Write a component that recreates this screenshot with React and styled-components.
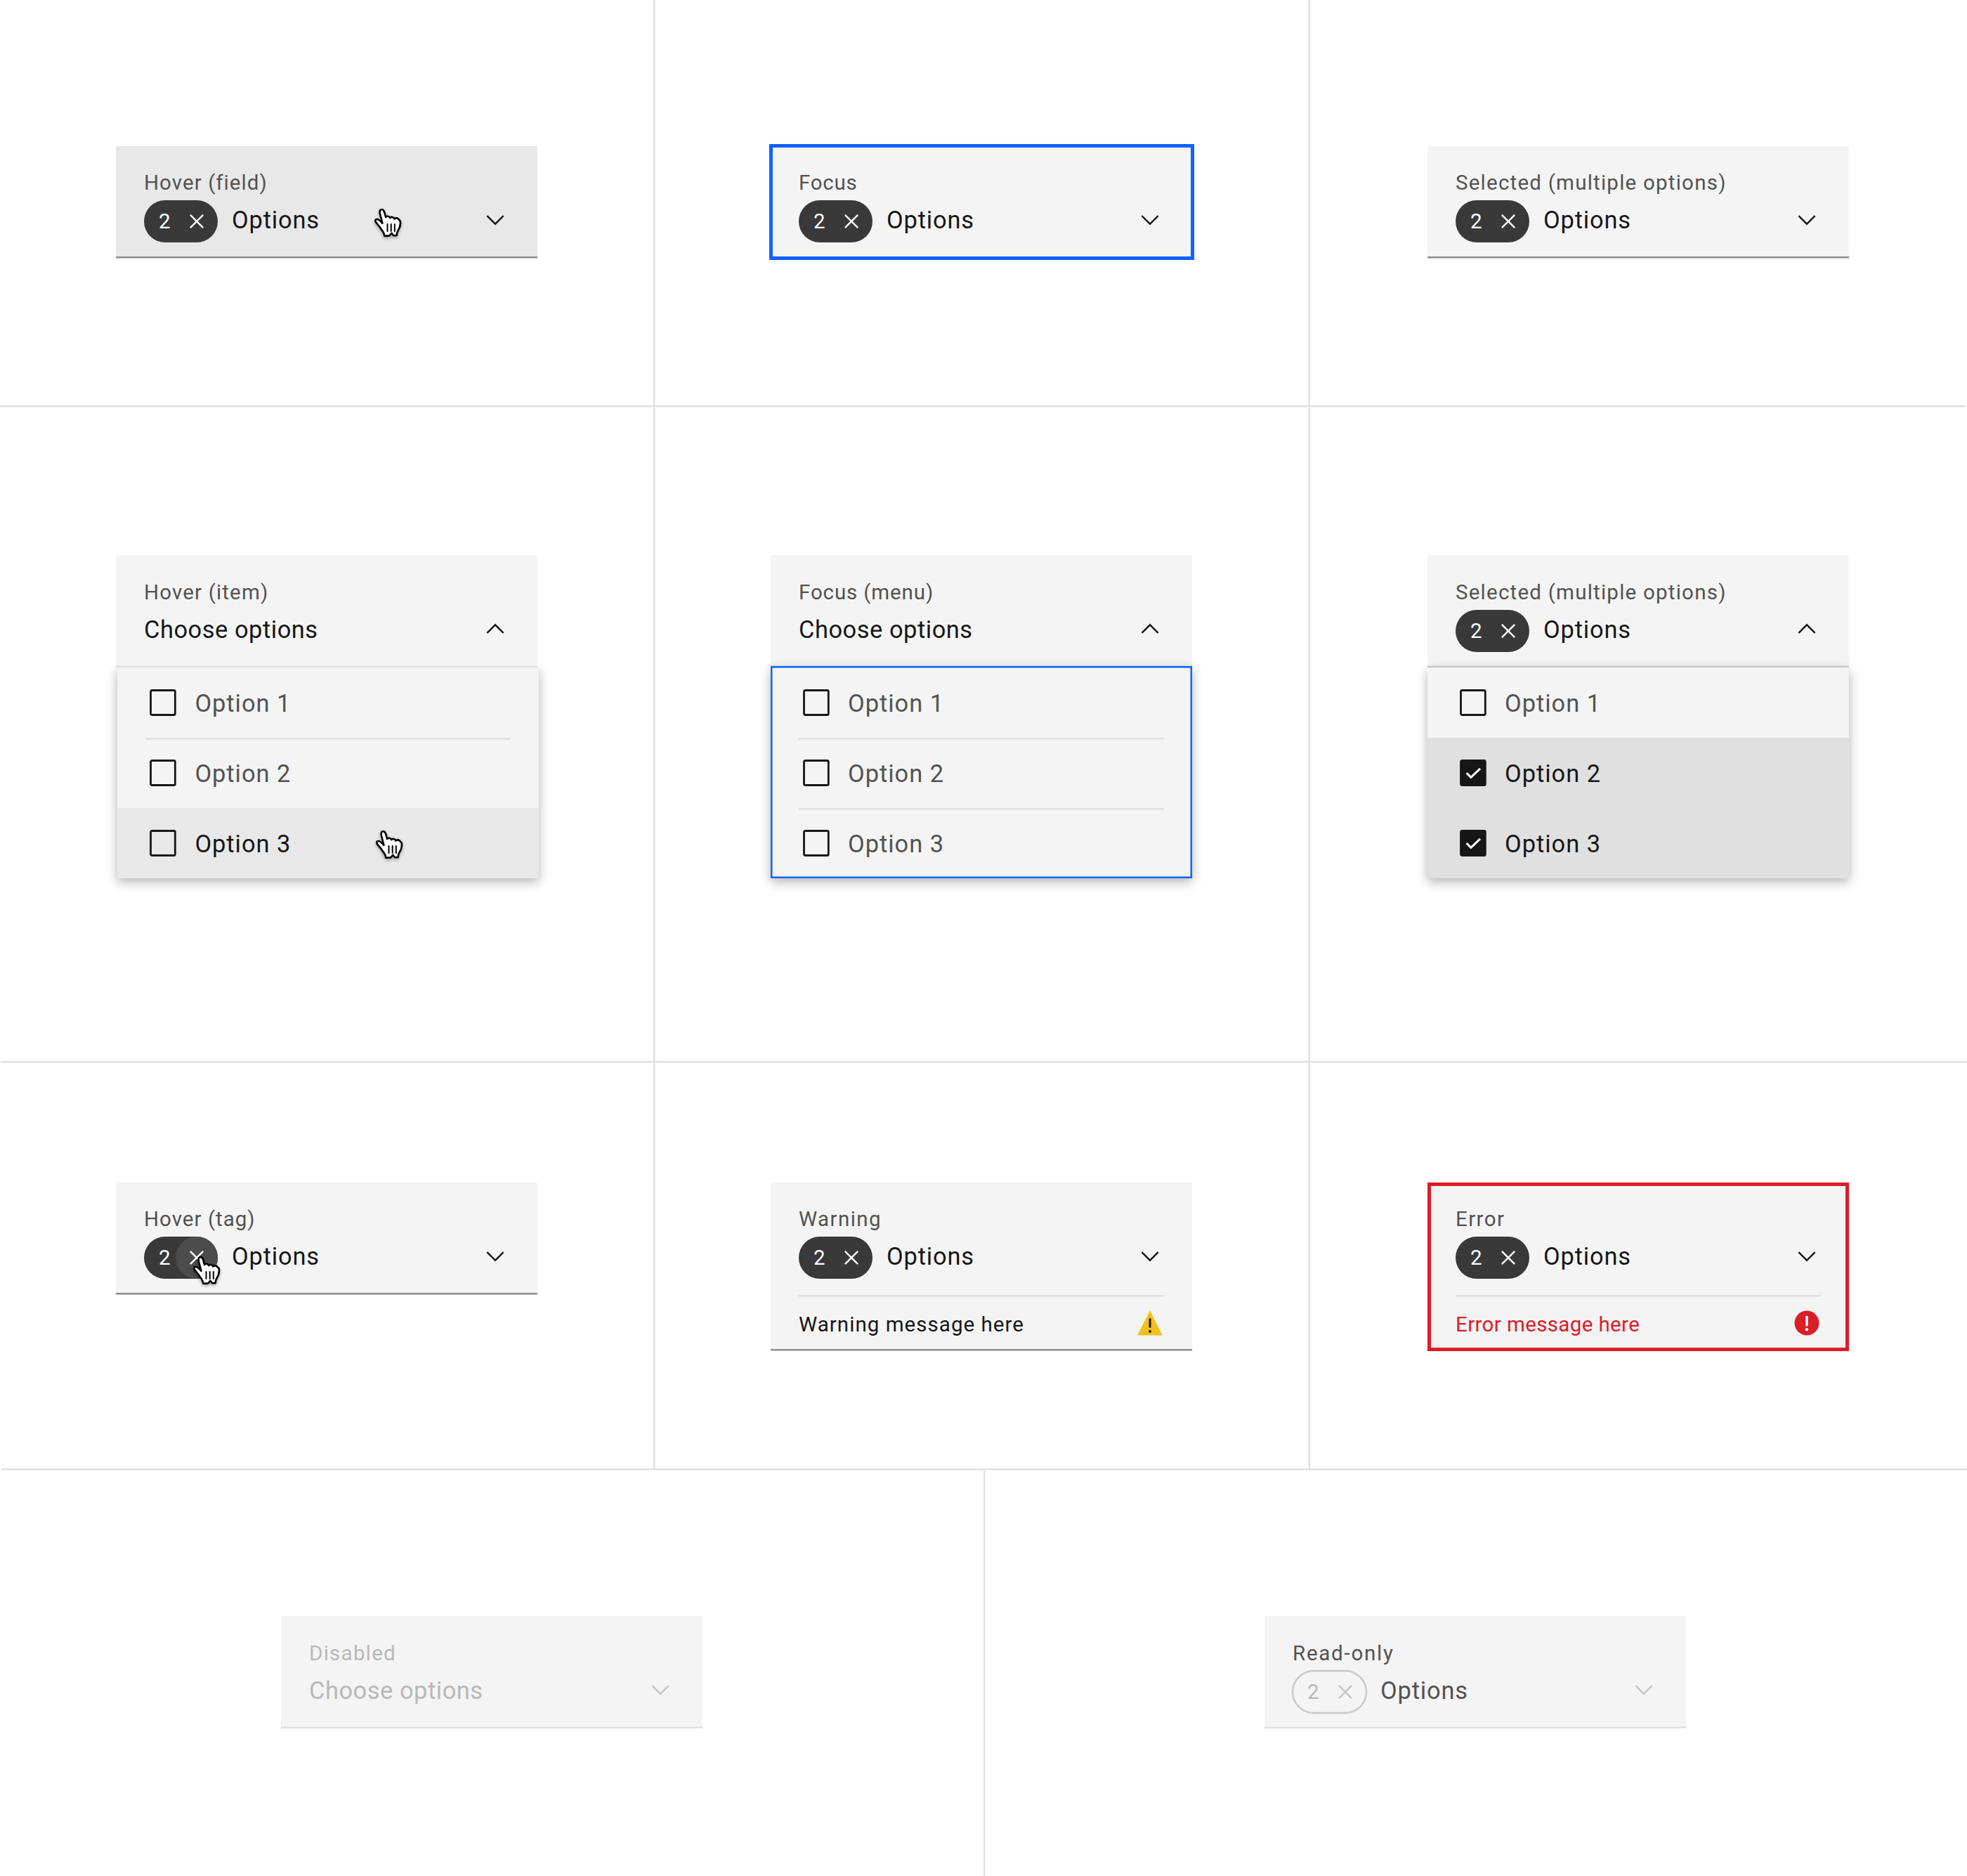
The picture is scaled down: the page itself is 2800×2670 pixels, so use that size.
import React from "react";
import styled, { createGlobalStyle, css } from "styled-components";

const color = {
  rule: "#e0e0e0",
  ruleSoft: "#f0f0f0",
  field: "#f4f4f4",
  fieldHover: "#e8e8e8",
  selected: "#e0e0e0",
  text: "#161616",
  label: "#525252",
  disabled: "#b8b8b8",
  iconDisabled: "#c6c6c6",
  tag: "#393939",
  tagHover: "#4c4c4c",
  focus: "#0f62fe",
  error: "#da1e28",
  warning: "#f1c21b",
};

const GlobalStyle = createGlobalStyle`
  body {
    margin: 0;
    background: #ffffff;
    color: ${color.text};
    font-family: Roboto, "Liberation Sans", sans-serif;
  }
`;

/* ---------- page grid ---------- */

const Page = styled.main`
  display: flex;
  flex-direction: column;
  width: 2800px;
  height: 2670px;
  overflow: hidden;
  background: #ffffff;
`;

const Band = styled.section`
  display: grid;
  grid-template-columns: ${(p) => p.$columns};
  height: ${(p) => p.$height}px;
`;

const HorizontalRule = styled.div`
  flex: none;
  height: 3px;
  margin-left: ${(p) => p.$start || 0}px;
  margin-right: ${(p) => p.$end || 0}px;
  background: linear-gradient(${color.rule} 0 2px, ${color.ruleSoft} 2px 3px);
`;

const VerticalRule = styled.div`
  background: linear-gradient(
    ${(p) => (p.$softStart ? "to left" : "to right")},
    ${color.rule} 0 2px,
    ${color.ruleSoft} 2px 3px
  );
`;

const Cell = styled.div`
  display: flex;
  flex-direction: column;
  align-items: center;
  padding-top: ${(p) => p.$top}px;
  padding-right: ${(p) => p.$right || 0}px;
`;

const Stack = styled.div`
  width: 600px;
`;

/* ---------- field ---------- */

const strongLine = (bg) => css`
  background: linear-gradient(to top, #c4c4c4 0 1px, #8d8d8d 1px 3px, ${bg} 3px);
`;
const subtleLine = (line) => css`
  background: linear-gradient(to top, ${line} 0 2px, #e9e9e9 2px 3px, ${color.field} 3px);
`;

const fieldLook = {
  plain: strongLine(color.field),
  hover: strongLine(color.fieldHover),
  subtle: subtleLine("#e0e0e0"),
  open: subtleLine("#d0d0d0"),
  focus: css`
    background: ${color.field};
    box-shadow: inset 0 0 0 5px ${color.focus};
    width: 605px;
    height: 165px;
    padding: 2.5px 3px 2.5px 2px;
  `,
  error: css`
    background: ${color.field};
    box-shadow: inset 0 0 0 5px ${color.error};
  `,
};

const Field = styled.div`
  position: relative;
  box-sizing: border-box;
  width: 600px;
  height: ${(p) => (p.$message ? 240 : 160)}px;
  z-index: ${(p) => (p.$raised ? 1 : "auto")};
  ${(p) => fieldLook[p.$look]}
`;

const FieldMain = styled.div`
  box-sizing: border-box;
  height: 160px;
  padding: 32.5px 40px 0;
`;

const FieldLabel = styled.div`
  height: 40px;
  font-size: 29.5px;
  line-height: 40px;
  letter-spacing: ${(p) => p.$track}px;
  white-space: nowrap;
  color: ${(p) => p.$color || color.label};
`;

const ValueRow = styled.div`
  display: flex;
  align-items: center;
  height: 55px;
  margin-top: 5px;
`;

const Value = styled.span`
  flex: 1;
  padding-top: 1px;
  font-size: 34.4px;
  line-height: 50px;
  letter-spacing: ${(p) => p.$track}px;
  white-space: nowrap;
  color: ${(p) => p.$color || color.text};
`;

const MessageRow = styled.div`
  display: flex;
  align-items: center;
  justify-content: space-between;
  height: 80px;
  margin: 0 40px;
  background: linear-gradient(#e0e0e0 0 2px, #e9e9e9 2px 3px, transparent 3px);
`;

const MessageText = styled.span`
  padding-top: 4px;
  font-size: 29.5px;
  line-height: 40px;
  letter-spacing: ${(p) => p.$track}px;
  color: ${(p) => p.$color};
`;

/* ---------- tag ---------- */

const TagBox = styled.span`
  position: relative;
  flex: none;
  display: flex;
  align-items: center;
  box-sizing: border-box;
  width: 105px;
  height: 60px;
  margin: 5px 20px 0 0;
  border-radius: 30px;
  background: ${color.tag};
  color: #ffffff;
  ${(p) =>
    p.$outline &&
    css`
      background: transparent;
      color: ${color.disabled};
      box-shadow: 0 0 0 1.25px ${color.iconDisabled}, inset 0 0 0 1.25px ${color.iconDisabled};
    `}
`;

const TagCount = styled.span`
  width: 24px;
  padding-left: 21px;
  font-size: 29.5px;
  line-height: 60px;
`;

const TagClose = styled.span`
  display: flex;
  align-items: center;
  justify-content: center;
  width: 60px;
  height: 60px;
  border-radius: 50%;
  background: ${(p) => (p.$hover ? color.tagHover : "transparent")};
  color: ${(p) => (p.$outline ? color.iconDisabled : "inherit")};
`;

/* ---------- menu ---------- */

const MenuBox = styled.div`
  position: relative;
  width: 600px;
  margin-left: ${(p) => p.$shift || 0}px;
  background: ${color.field};
  box-shadow: 0 5px 15px rgba(0, 0, 0, 0.3);
  ${(p) =>
    p.$focus &&
    css`
      margin-top: -2.5px;
      padding-top: 2.5px;
      box-shadow: inset 0 0 0 2.5px ${color.focus}, 0 5px 15px rgba(0, 0, 0, 0.3);
    `}
`;

const optionFill = { hover: color.fieldHover, selected: color.selected };

const OptionRow = styled.div`
  position: relative;
  display: flex;
  align-items: center;
  gap: 20px;
  box-sizing: border-box;
  height: 100px;
  padding: 0 40px;
  color: ${(p) => (p.$state ? color.text : color.label)};
  background: ${(p) => optionFill[p.$state] || "transparent"};
  ${(p) =>
    p.$divider &&
    css`
      background: linear-gradient(#e0e0e0 0 2px, #e9e9e9 2px 3px) 40px 0 / 520px 3px no-repeat;
    `}
`;

const OptionText = styled.span`
  padding-top: 2px;
  font-size: 34.4px;
  line-height: 50px;
  letter-spacing: 1px;
`;

const Icon = styled.svg`
  flex: none;
  display: block;
`;

const CursorIcon = styled.svg`
  position: absolute;
  left: ${(p) => p.$x}px;
  top: ${(p) => p.$y}px;
  overflow: visible;
  filter: drop-shadow(0 2.5px 2px rgba(0, 0, 0, 0.35));
`;

/* ---------- icons ---------- */

function Chevron({ up, tint = color.text }) {
  return (
    <Icon width="40" height="40" viewBox="0 0 16 16" fill={tint}>
      {up ? (
        <path d="M8 5l5 5-.7.7L8 6.4l-4.3 4.3L3 10z" />
      ) : (
        <path d="M8 11L3 6l.7-.7L8 9.6l4.3-4.3.7.7z" />
      )}
    </Icon>
  );
}

function Close() {
  return (
    <Icon width="40" height="40" viewBox="0 0 32 32" fill="currentColor">
      <path d="M24 9.4L22.6 8 16 14.6 9.4 8 8 9.4l6.6 6.6L8 22.6 9.4 24l6.6-6.6 6.6 6.6 1.4-1.4-6.6-6.6L24 9.4z" />
    </Icon>
  );
}

function Checkbox({ checked }) {
  return (
    <Icon width="50" height="50" viewBox="0 0 50 50" fill="none">
      <rect
        x="7.5"
        y="7.5"
        width="34.8"
        height="35"
        rx="1.8"
        fill={checked ? color.text : "none"}
        stroke={color.text}
        strokeWidth="2.8"
      />
      {checked && <path d="M15.6 25.2l6.3 6.1L35 18.8" stroke="#f4f4f4" strokeWidth="3.1" />}
    </Icon>
  );
}

function WarningIcon() {
  return (
    <Icon width="40" height="40" viewBox="0 0 40 40">
      <path
        d="M20 3.6L36.9 37H3.1z"
        fill={color.warning}
        stroke={color.warning}
        strokeWidth="1.2"
        strokeLinejoin="round"
      />
      <rect x="18.5" y="13.5" width="3" height="13" fill="#161616" />
      <circle cx="20" cy="31.8" r="1.9" fill="#161616" />
    </Icon>
  );
}

function ErrorIcon() {
  return (
    <Icon width="40" height="40" viewBox="0 0 40 40">
      <circle cx="20" cy="20" r="17.5" fill={color.error} />
      <rect x="18.4" y="9.8" width="3.2" height="14.6" fill="#ffffff" />
      <circle cx="20" cy="29.2" r="2.1" fill="#ffffff" />
    </Icon>
  );
}

function HandCursor({ x, y }) {
  return (
    <CursorIcon $x={x} $y={y} width="39" height="41" viewBox="0 0 39 41" fill="none">
      <path
        d="M11.4 20.8L7.9 7.2C7.1 3.7 7.8 1.6 10 1.3c2.3-.3 3.5 1.2 4.2 3.8l2 7c1.300-2 4.900-1.900 5.900 1.100 1.500-2.100 5.100-1.700 6.200 1.300 1.700-1.700 4.900-1.500 6.300.8 2 1 2.500 2.700 2.400 5-.1 4.700-1.200 7.700-3.500 10.900-1.300 2-1.800 3.800-1.700 6.500-1.600.6-3.500.6-4.900.3L24.400 34.800c-1.200.6-1.900 3-3.300 3.600-2.300.4-4.800.3-6.900.3-.1-2.700-1.100-4.700-2.500-6.700L8.400 27.400C7 24.300 4.400 22.800 2 19.300.6 17.200 1.200 15.300 3.300 15c2.900-.2 4.900 2.200 8.100 5.800z"
        fill="#ffffff"
        stroke="#000000"
        strokeWidth="2.6"
        strokeLinejoin="round"
      />
      <path
        d="M18.500 22v10M23.700 22v10M28.800 22v10"
        stroke="#000000"
        strokeWidth="2"
        strokeLinecap="round"
      />
    </CursorIcon>
  );
}

/* ---------- composed parts ---------- */

function Tag({ outline, hover }) {
  return (
    <TagBox $outline={outline}>
      <TagCount>2</TagCount>
      <TagClose $hover={hover} $outline={outline}>
        <Close />
      </TagClose>
      {hover && <HandCursor x={70.3} y={28.3} />}
    </TagBox>
  );
}

function MultiSelect({
  label,
  track,
  look = "plain",
  tag = true,
  tagHover,
  tagOutline,
  open,
  raised,
  labelColor,
  valueColor,
  iconColor,
  message,
  children,
}) {
  return (
    <Field $look={look} $message={Boolean(message)} $raised={raised}>
      <FieldMain>
        <FieldLabel $track={track} $color={labelColor}>
          {label}
        </FieldLabel>
        <ValueRow>
          {tag && <Tag hover={tagHover} outline={tagOutline} />}
          <Value $track={tag ? 0.85 : 0.55} $color={valueColor}>
            {tag ? "Options" : "Choose options"}
          </Value>
          <Chevron up={open} tint={iconColor} />
        </ValueRow>
      </FieldMain>
      {message}
      {children}
    </Field>
  );
}

function Option({ label, state, divider, children }) {
  return (
    <OptionRow $state={state} $divider={divider}>
      <Checkbox checked={state === "selected"} />
      <OptionText>{label}</OptionText>
      {children}
    </OptionRow>
  );
}

const THREE = "930px 3px 929px 3px 1fr";
const TWO = "1400px 3px 1fr";

export default function App() {
  return (
    <>
      <GlobalStyle />
      <Page>
        <Band $columns={THREE} $height={577}>
          <Cell $top={207.5}>
            <MultiSelect label="Hover (field)" track={1.07} look="hover">
              <HandCursor x={367.5} y={89.8} />
            </MultiSelect>
          </Cell>
          <VerticalRule />
          <Cell $top={205}>
            <MultiSelect label="Focus" track={0.72} look="focus" />
          </Cell>
          <VerticalRule $softStart />
          <Cell $top={207.5} $right={1}>
            <MultiSelect label="Selected (multiple options)" track={1.23} />
          </Cell>
        </Band>

        <HorizontalRule $end={2} />

        <Band $columns={THREE} $height={930}>
          <Cell $top={210}>
            <Stack>
              <MultiSelect label="Hover (item)" track={1.16} look="subtle" tag={false} open raised />
              <MenuBox $shift={2.4}>
                <Option label="Option 1" />
                <Option label="Option 2" divider />
                <Option label="Option 3" state="hover">
                  <HandCursor x={367.4} y={32.3} />
                </Option>
              </MenuBox>
            </Stack>
          </Cell>
          <VerticalRule />
          <Cell $top={210} $right={1}>
            <Stack>
              <MultiSelect label="Focus (menu)" track={0.88} look="subtle" tag={false} open />
              <MenuBox $focus>
                <Option label="Option 1" />
                <Option label="Option 2" divider />
                <Option label="Option 3" divider />
              </MenuBox>
            </Stack>
          </Cell>
          <VerticalRule $softStart />
          <Cell $top={210} $right={1}>
            <Stack>
              <MultiSelect label="Selected (multiple options)" track={1.23} look="open" open />
              <MenuBox>
                <Option label="Option 1" />
                <Option label="Option 2" state="selected" />
                <Option label="Option 3" state="selected" />
              </MenuBox>
            </Stack>
          </Cell>
        </Band>

        <HorizontalRule $start={2} />

        <Band $columns={THREE} $height={577}>
          <Cell $top={169.5}>
            <MultiSelect label="Hover (tag)" track={1.03} tagHover />
          </Cell>
          <VerticalRule />
          <Cell $top={169.5} $right={1}>
            <MultiSelect
              label="Warning"
              track={1.4}
              message={
                <MessageRow>
                  <MessageText $track={1.04} $color={color.text}>
                    Warning message here
                  </MessageText>
                  <WarningIcon />
                </MessageRow>
              }
            />
          </Cell>
          <VerticalRule $softStart />
          <Cell $top={169.5} $right={1}>
            <MultiSelect
              label="Error"
              track={1.4}
              look="error"
              message={
                <MessageRow>
                  <MessageText $track={0.38} $color={color.error}>
                    Error message here
                  </MessageText>
                  <ErrorIcon />
                </MessageRow>
              }
            />
          </Cell>
        </Band>

        <HorizontalRule $start={2} />

        <Band $columns={TWO} $height={577}>
          <Cell $top={207}>
            <MultiSelect
              label="Disabled"
              track={1.27}
              look="subtle"
              tag={false}
              labelColor={color.disabled}
              valueColor={color.disabled}
              iconColor={color.iconDisabled}
            />
          </Cell>
          <VerticalRule />
          <Cell $top={207} $right={3}>
            <MultiSelect
              label="Read-only"
              track={1.75}
              look="subtle"
              tagOutline
              valueColor={color.label}
              iconColor={color.iconDisabled}
            />
          </Cell>
        </Band>
      </Page>
    </>
  );
}
